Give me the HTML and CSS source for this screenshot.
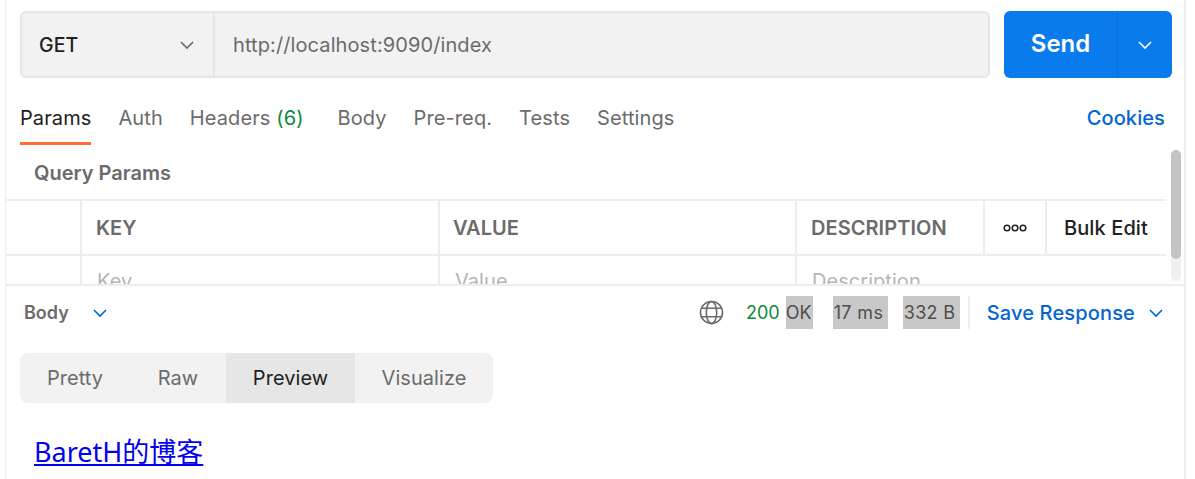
FILE: index.html
```html
<!DOCTYPE html>
<html lang="zh">
<head>
<meta charset="utf-8">
<title>Postman</title>
<link rel="stylesheet" href="styles.css">
</head>
<body>
<div class="app">
  <section class="request">
    <div class="urlbar">
      <div class="url-group">
        <div class="method"><span>GET</span>
          <svg class="chev" viewBox="0 0 16 16"><path d="M2 5l6 6 6-6"/></svg>
        </div>
        <div class="url">http://localhost:9090/index</div>
      </div>
      <div class="send">
        <span class="send-label">Send</span>
        <span class="send-more"><svg class="chev" viewBox="0 0 16 16"><path d="M2 5l6 6 6-6"/></svg></span>
      </div>
    </div>
    <nav class="tabs">
      <span class="tab active">Params</span>
      <span class="tab">Auth</span>
      <span class="tab">Headers <em class="count">(6)</em></span>
      <span class="tab tab-gap">Body</span>
      <span class="tab">Pre-req.</span>
      <span class="tab">Tests</span>
      <span class="tab">Settings</span>
      <span class="cookies">Cookies</span>
    </nav>
    <div class="scroll-area">
      <h2 class="qp">Query Params</h2>
      <div class="table">
        <div class="row head">
          <div class="c c0"></div>
          <div class="c c1">KEY</div>
          <div class="c c2">VALUE</div>
          <div class="c c3">DESCRIPTION</div>
          <div class="c c4"><svg class="dots" viewBox="0 0 24 8"><circle cx="4" cy="4" r="2.8"/><circle cx="12" cy="4" r="2.8"/><circle cx="20" cy="4" r="2.8"/></svg></div>
          <div class="c c5">Bulk Edit</div>
        </div>
        <div class="row input">
          <div class="c c0"></div>
          <div class="c c1">Key</div>
          <div class="c c2">Value</div>
          <div class="c c3">Description</div>
        </div>
      </div>
      <div class="scrollbar"><div class="thumb"></div></div>
    </div>
  </section>
  <section class="response">
    <div class="resp-head">
      <span class="body-label">Body</span>
      <svg class="chev blue body-chev" viewBox="0 0 16 16"><path d="M2 5l6 6 6-6"/></svg>
      <div class="status">
        <svg class="globe" viewBox="0 0 24 24"><circle cx="12" cy="12" r="10.6"/><ellipse cx="12" cy="12" rx="5" ry="10.6"/><path d="M2.2 8h19.6M2.2 16h19.6"/></svg>
        <span class="code">200</span>
        <span class="hl hl-ok">OK</span>
        <span class="hl hl-ms">17 ms</span>
        <span class="hl hl-size">332 B</span>
        <span class="sep"></span>
        <span class="save">Save Response</span>
        <svg class="chev blue save-chev" viewBox="0 0 16 16"><path d="M2 5l6 6 6-6"/></svg>
      </div>
    </div>
    <div class="seg">
      <span class="s s-pretty">Pretty</span>
      <span class="s s-raw">Raw</span>
      <span class="s s-preview">Preview</span>
      <span class="s s-vis">Visualize</span>
    </div>
    <div class="preview"><a href="#" class="link">BaretH的博客</a></div>
  </section>
</div>
</body>
</html>
```
FILE: styles.css
```css
* { box-sizing: border-box; }
html, body { margin: 0; padding: 0; background: #fff; }
body { width: 1195px; height: 479px; overflow: hidden; font-family: Inter, "Noto Sans CJK SC", sans-serif; letter-spacing: .05px; }
.app { margin-left: 5px; width: 1181px; height: 479px; border-left: 1px solid #efefef; border-right: 2px solid #ededed; overflow: hidden; }

.request { height: 286px; border-bottom: 2px solid #ededed; overflow: hidden; }
.urlbar { display: flex; padding: 11px 12px 0 14px; height: 78px; }
.url-group { display: flex; width: 970px; height: 67px; background: #f2f2f2; border: 2px solid #e6e6e6; border-radius: 6px; }
.method { width: 193px; display: flex; align-items: center; justify-content: space-between; padding: 0 18px 0 17px; border-right: 2px solid #e6e6e6; font-size: 19.5px; font-weight: 500; color: #212121; }
.url { padding-left: 18px; display: flex; align-items: center; font-size: 20px; letter-spacing: .1px; color: #6b6b6b; }
.chev { width: 16px; height: 16px; fill: none; stroke: #6b6b6b; stroke-width: 1.6; }
.chev.blue { stroke: #0265d2; }
.send { margin-left: 14px; width: 168px; height: 67px; background: #097bed; border-radius: 6px; display: flex; color: #fff; }
.send-label { width: 114px; display: flex; align-items: center; justify-content: center; padding-bottom: 2px; font-size: 24px; font-weight: 600; letter-spacing: 0; border-right: 1px solid #0b6fd6; }
.send-more { flex: 1; display: flex; align-items: center; justify-content: center; }
.send-more .chev { stroke: #fff; }

.tabs { display: flex; align-items: flex-start; height: 67px; padding: 24px 19px 0 14px; font-size: 20px; letter-spacing: .1px; color: #6b6b6b; gap: 27px; }
.tab { height: 43px; line-height: 32px; white-space: nowrap; }
.tab.active { color: #212121; border-bottom: 3px solid #ff6c37; }
.tab-gap { margin-left: 7px; }
.count { font-style: normal; color: #0a8a3a; }
.cookies { margin-left: auto; line-height: 32px; color: #0265d2; font-weight: 500; letter-spacing: .1px; }

.scroll-area { position: relative; }
.qp { margin: 0; height: 54px; padding: 15px 0 0 28px; font-size: 20px; line-height: 26px; font-weight: 600; letter-spacing: 0; color: #6b6b6b; }
.table { width: 1160px; }
.row { display: flex; border-top: 2px solid #ededed; }
.row.head { height: 55px; }
.row.input { height: 60px; }
.c { border-right: 2px solid #ededed; display: flex; align-items: center; padding-left: 14px; font-size: 20px; }
.head .c { color: #6b6b6b; font-weight: 600; }
.c0 { width: 76px; }
.c1 { width: 358px; }
.c2 { width: 357px; }
.c3 { width: 188px; }
.c4 { width: 62px; justify-content: center; padding-left: 0; }
.head .c2 { padding-left: 13px; }
.head .c5 { flex: 1; border-right: 0; color: #212121; font-weight: 500; padding-left: 17px; letter-spacing: .1px; }
.input .c { align-items: flex-start; color: #b5b5b5; padding-top: 13px; padding-left: 15px; line-height: 24px; }
.input .c3 { border-right: 0; }
.dots { width: 24px; height: 8px; fill: none; stroke: #212121; stroke-width: 1.5; }
.scrollbar { position: absolute; top: 5px; right: 3px; width: 10px; height: 131px; background: #f0f0f0; border-radius: 5px; }
.thumb { height: 109px; background: #c4c4c4; border-radius: 5px; }

.resp-head { display: flex; align-items: center; height: 53px; padding: 0 20px 0 18px; }
.body-label { font-size: 18px; font-weight: 600; color: #6b6b6b; letter-spacing: 0; }
.body-chev { margin-left: 23px; }
.status { margin-left: auto; display: flex; align-items: center; height: 33px; font-size: 18px; color: #6b6b6b; letter-spacing: 0; }
.globe { width: 25px; height: 25px; fill: none; stroke: #6b6b6b; stroke-width: 1.5; margin-right: 22px; }
.code { color: #0a8a3a; margin-right: 6px; }
.hl { background: #c8c8c8; height: 33px; line-height: 33px; color: #4f4f4f; letter-spacing: .35px; padding-left: 1px; white-space: nowrap; }
.hl-ok { width: 27px; margin-right: 20px; padding-left: 0; letter-spacing: 0; }
.hl-ms { width: 55px; margin-right: 15px; }
.hl-size { width: 57px; margin-right: 8px; }
.sep { width: 2px; height: 33px; background: #ededed; margin-right: 17px; }
.save { font-size: 20px; font-weight: 500; letter-spacing: .15px; color: #0265d2; margin-right: 13px; }

.seg { display: flex; margin: 14px 0 0 14px; width: 473px; height: 50px; background: #f2f2f2; border-radius: 8px; overflow: hidden; font-size: 20px; color: #6b6b6b; }
.s { display: flex; align-items: center; justify-content: center; }
.s-pretty { width: 110px; }
.s-raw { width: 96px; }
.s-preview { width: 129px; background: #e6e6e6; color: #212121; }
.s-vis { flex: 1; }
.preview { padding: 31px 0 0 28px; }
.link { color: #0000ee; font-size: 27px; line-height: 36px; letter-spacing: 0; font-family: "Noto Sans", "Noto Sans CJK SC", sans-serif; }
```
